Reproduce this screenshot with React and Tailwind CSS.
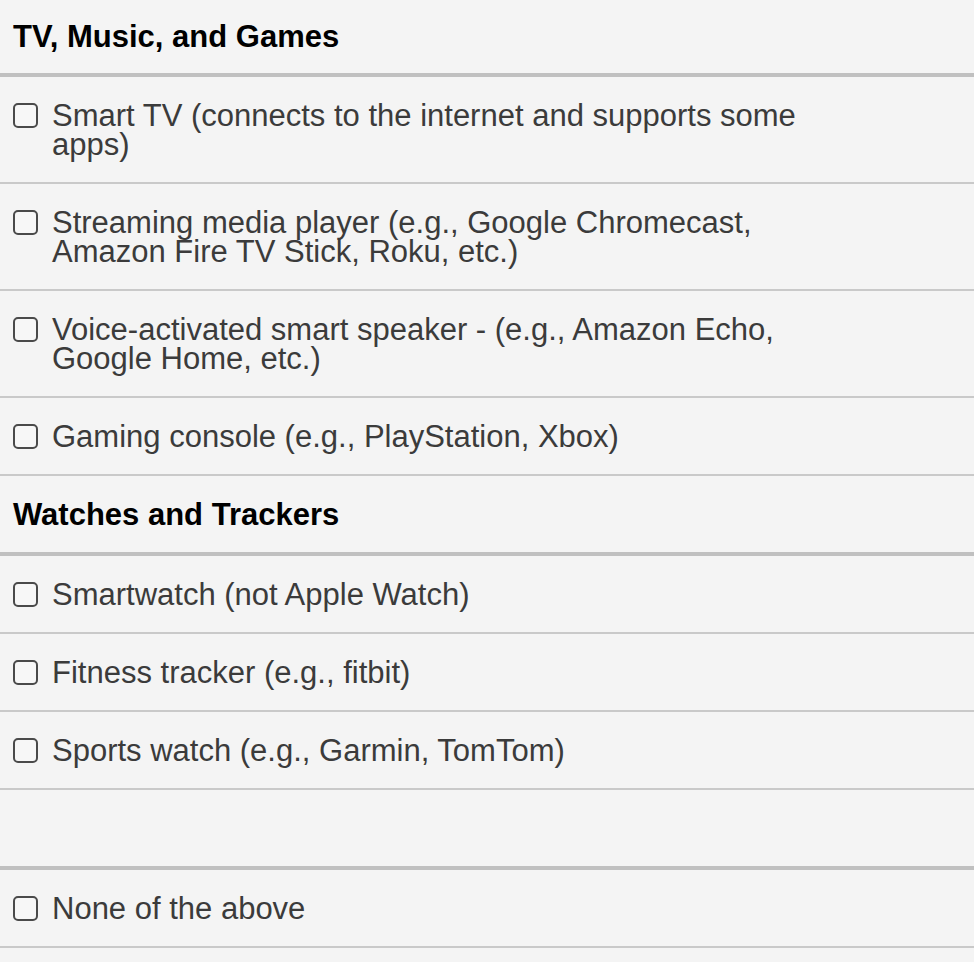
const sections = [
  {
    title: 'TV, Music, and Games',
    head: 'pt-[22px] pb-[22px]',
    items: [
      'Smart TV (connects to the internet and supports some apps)',
      'Streaming media player (e.g., Google Chromecast, Amazon Fire TV Stick, Roku, etc.)',
      'Voice-activated smart speaker - (e.g., Amazon Echo, Google Home, etc.)',
      'Gaming console (e.g., PlayStation, Xbox)',
    ],
  },
  {
    title: 'Watches and Trackers',
    head: 'pt-[24px] pb-[23px]',
    items: [
      'Smartwatch (not Apple Watch)',
      'Fitness tracker (e.g., fitbit)',
      'Sports watch (e.g., Garmin, TomTom)',
    ],
  },
]

function CheckRow({ label }) {
  return (
    <label className="flex items-start gap-[14px] px-[13px] py-[23.5px] border-b-2 border-[#c9c9c9]">
      <span className="mt-[2px] w-[25px] h-[25px] shrink-0 rounded-[5px] border-2 border-[#4a4a4a] bg-[#f7f7f7]" />
      <span className="max-w-[785px] text-[31px] leading-[29px] text-[#3b3b3b]">{label}</span>
    </label>
  )
}

export default function App() {
  return (
    <div
      className="min-h-[962px] w-[974px] bg-[#f4f4f4]"
      style={{ fontFamily: '"Liberation Sans", Arial, sans-serif' }}
    >
      {sections.map((s) => (
        <div key={s.title}>
          <div className={`px-[13px] border-b-4 border-[#c0c0c0] ${s.head}`}>
            <h2 className="text-[31px] leading-[29px] font-bold text-black">{s.title}</h2>
          </div>
          {s.items.map((item) => (
            <CheckRow key={item} label={item} />
          ))}
        </div>
      ))}

      {/* empty spacer group */}
      <div className="h-[80px] border-b-4 border-[#c0c0c0]" />
      <CheckRow label="None of the above" />
    </div>
  )
}
